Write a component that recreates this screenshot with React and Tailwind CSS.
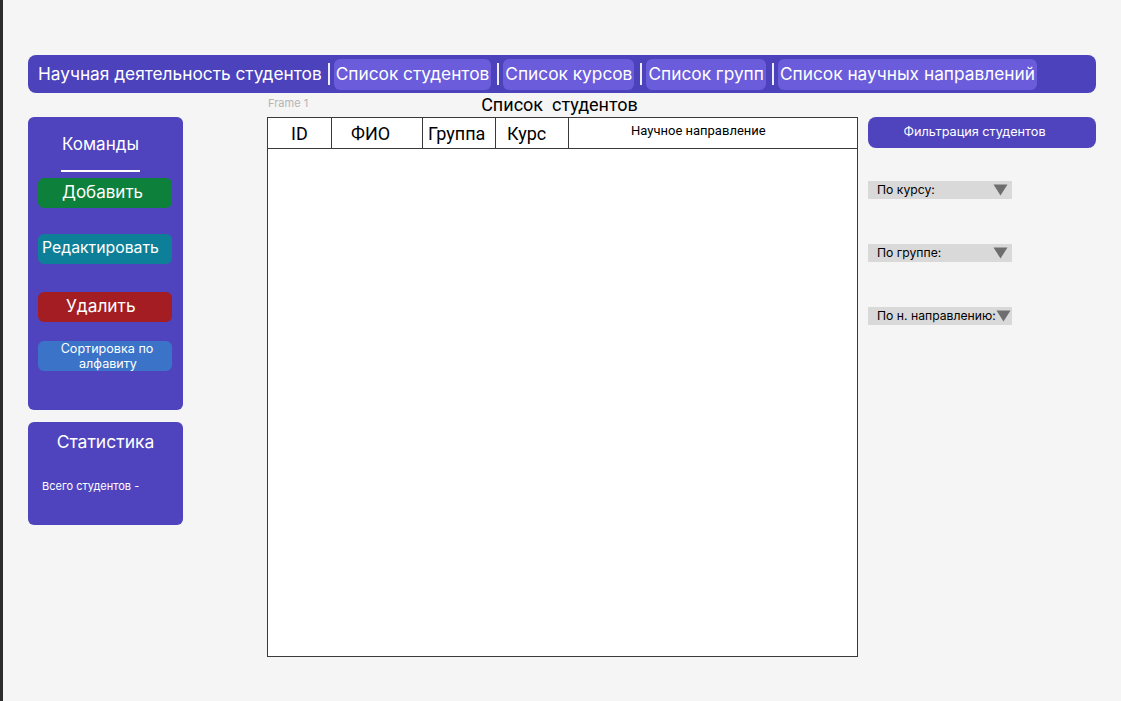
import React from "react";

const tabs = ["Список студентов", "Список курсов", "Список групп", "Список научных направлений"];

const filters = [
  { label: "По курсу:", mt: "mt-[33px]" },
  { label: "По группе:", mt: "mt-[45px]" },
  { label: "По н. направлению:", mt: "mt-[45px]" },
];

const Triangle = () => (
  <svg width="15" height="12" viewBox="0 0 15 12" className="shrink-0">
    <path d="M0.5 0.5 H14.5 L7.5 11.5 Z" fill="#6e6e6e" />
  </svg>
);

const App = () => {
  return (
    <div className="min-h-[701px] w-full bg-[#f5f5f5] border-l-[3px] border-[#2c2c2c] font-['Inter',sans-serif] pt-[55px] pl-[25px] pr-[25px]">
      {/* верхняя навигация */}
      <nav className="h-[38px] w-[1068px] rounded-lg bg-[#4c42bc] flex items-center pl-[10px] text-white text-[17.3px] leading-[24px]">
        <span className="whitespace-nowrap">Научная деятельность студентов</span>
        {tabs.map((tab) => (
          <React.Fragment key={tab}>
            <span className="ml-[6px] mr-[4px] h-[22px] w-[2px] bg-white/90 shrink-0" />
            <button className="h-[31px] rounded-md bg-[#6a5cdb] px-[2px] whitespace-nowrap text-white">
              {tab}
            </button>
          </React.Fragment>
        ))}
      </nav>

      <div className="flex items-start">
        {/* левая колонка */}
        <div className="mt-[24px] w-[155px] flex flex-col gap-[12px]">
          <div className="h-[293px] rounded-md bg-[#4f44bd] pt-[15px] pl-[10px] pr-[11px]">
            <div className="ml-[23px] w-[79px] text-center text-white text-[17px] leading-[24px]">
              Команды
            </div>
            <div className="ml-[23px] mt-[14px] h-[2px] w-[79px] bg-white" />
            <button className="mt-[6px] flex h-[30px] w-full items-center rounded-md bg-[#0d803c] pl-[24px] text-[17px] text-white">
              Добавить
            </button>
            <button className="mt-[26px] flex h-[30px] w-full items-center rounded-md bg-[#0e7f99] pl-[4px] pb-[3px] text-[15.8px] text-white">
              Редактировать
            </button>
            <button className="mt-[28px] flex h-[30px] w-full items-center rounded-md bg-[#a31d22] pl-[28px] pb-[2px] text-[17.3px] text-white">
              Удалить
            </button>
            <button className="mt-[19px] flex h-[30px] w-full flex-col items-center justify-center rounded-md bg-[#3a73c8] text-[12.6px] leading-[15px] text-white">
              <span className="pl-[4px]">Сортировка по</span>
              <span className="pl-[6px]">алфавиту</span>
            </button>
          </div>

          <div className="h-[103px] rounded-md bg-[#4f44bd] pt-[8px]">
            <div className="text-center text-white text-[17.5px] leading-[24px]">Статистика</div>
            <div className="mt-[24px] pl-[14px] text-[11px] text-white">Всего студентов -</div>
          </div>
        </div>

        {/* таблица */}
        <div className="ml-[84px] w-[591px] font-['Roboto',sans-serif]">
          <div className="relative h-[24px] text-center text-[18px] leading-[24px] text-black">
            <span className="absolute left-[1px] top-[3px] text-[11px] leading-[14px] text-[#b4b4b4] font-['Inter',sans-serif]">
              Frame 1
            </span>
            <span className="whitespace-pre pr-[6px]">Список  студентов</span>
          </div>
          <div className="h-[540px] border border-[#3a3a3a] bg-white">
            <div className="flex h-[31px] border-b border-[#3a3a3a] text-black">
              <div className="flex w-[64px] items-center border-r border-[#3a3a3a] pl-[23px] text-[18px]">ID</div>
              <div className="flex w-[91px] items-center border-r border-[#3a3a3a] pl-[19px] text-[18px]">ФИО</div>
              <div className="flex w-[73px] items-center border-r border-[#3a3a3a] pl-[5px] text-[18px]">Группа</div>
              <div className="flex w-[73px] items-center border-r border-[#3a3a3a] pl-[11px] text-[18px]">Курс</div>
              <div className="flex-1 pl-[62px] pt-[5px] text-[13px] leading-[16px]">Научное направление</div>
            </div>
          </div>
        </div>

        {/* фильтры */}
        <div className="ml-[10px] mt-[24px] w-[228px]">
          <button className="flex h-[31px] w-full items-center justify-center rounded-lg bg-[#4f44bd] pr-[15px] pb-[2px] text-[12.7px] text-white">
            Фильтрация студентов
          </button>
          {filters.map((f) => (
            <div
              key={f.label}
              className={`${f.mt} flex h-[18px] w-[144px] items-center justify-between bg-[#d9d9d9] pl-[9px] pr-[4px] text-[12.2px] text-black`}
            >
              <span className="whitespace-nowrap">{f.label}</span>
              <Triangle />
            </div>
          ))}
        </div>
      </div>
    </div>
  );
};

export default App;
